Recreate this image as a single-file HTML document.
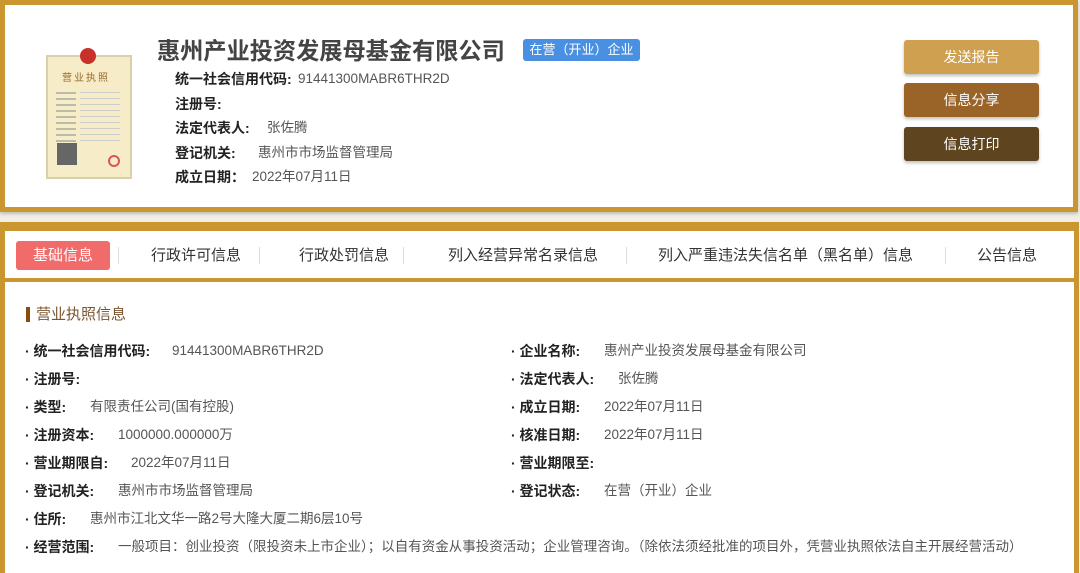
<!DOCTYPE html>
<html><head><meta charset="utf-8"><style>
*{margin:0;padding:0;box-sizing:border-box}
html{width:1080px;height:573px;overflow:hidden}
body{width:1080px;height:573px;overflow:hidden;background:#f1eee8;font-family:"Liberation Sans","Noto Sans CJK SC",sans-serif;position:relative;color:#333;line-height:20px}
.a{position:absolute;white-space:nowrap}
.card1{position:absolute;left:0;top:0;width:1078px;height:212px;border:5px solid #c9962f;background:#fff;box-shadow:0 2px 3px rgba(0,0,0,.2)}
.card2{position:absolute;left:0;top:222px;width:1079px;height:351px;border:5px solid #c9962f;border-top:9px solid #c9962f;border-bottom:0;background:#fff}
.lb{font-weight:bold;color:#222;font-size:14px}
.v{color:#555;font-size:13.5px}
.btn{position:absolute;left:904px;width:135px;height:34px;border-radius:3px;color:#fff;font-size:14px;text-align:center;line-height:34px;box-shadow:0 2px 3px rgba(0,0,0,.25)}
.tab{position:absolute;top:246px;font-size:15px;color:#333}
.sep{position:absolute;top:247px;width:1px;height:17px;background:#ddd}
.r{position:absolute;font-size:13.5px;white-space:nowrap}
.r b{color:#222;font-size:14px}
.r span{color:#555}
</style></head><body>
<div class="card1"></div>
<div class="a" style="left:46px;top:55px;width:86px;height:124px;background:#f7ecc8;border:2px solid #d9cfa8"></div>
<div class="a" style="left:80px;top:48px;width:16px;height:16px;border-radius:50%;background:#c8302a"></div>
<div class="a" style="left:62px;top:69px;font-size:10px;color:#9a6a2a;letter-spacing:2px">营业执照</div>
<div class="a" style="left:56px;top:92px;width:20px;height:50px;background:repeating-linear-gradient(#bba 0 2px,transparent 2px 6px)"></div>
<div class="a" style="left:80px;top:92px;width:40px;height:50px;background:repeating-linear-gradient(#ccc 0 1px,transparent 1px 6px)"></div>
<div class="a" style="left:57px;top:143px;width:20px;height:22px;background:#666"></div>
<div class="a" style="left:108px;top:155px;width:12px;height:12px;border-radius:50%;border:2px solid #d55"></div>

<div class="a" style="left:157px;top:36px;font-size:23.2px;line-height:30px;font-weight:bold;color:#444">惠州产业投资发展母基金有限公司</div>
<div class="a" style="left:523px;top:39px;width:117px;height:22px;background:#4a90e2;border-radius:3px;color:#fff;font-size:13px;line-height:22px;text-align:center">在营（开业）企业</div>
<div class="a lb" style="left:175px;top:69px">统一社会信用代码:</div><div class="a v" style="left:298px;top:69px">91441300MABR6THR2D</div>
<div class="a lb" style="left:175px;top:94px">注册号:</div>
<div class="a lb" style="left:175px;top:118px">法定代表人:</div><div class="a v" style="left:267px;top:118px">张佐腾</div>
<div class="a lb" style="left:175px;top:143px">登记机关:</div><div class="a v" style="left:258px;top:143px">惠州市市场监督管理局</div>
<div class="a lb" style="left:175px;top:167px">成立日期：</div><div class="a v" style="left:252px;top:167px">2022年07月11日</div>

<div class="btn" style="top:40px;background:#cfa04f">发送报告</div>
<div class="btn" style="top:83px;background:#9a6428">信息分享</div>
<div class="btn" style="top:127px;background:#5e4520">信息打印</div>

<div class="card2"></div>
<div class="a" style="left:5px;top:278px;width:1071px;height:4px;background:#c9962f"></div>
<div class="a" style="left:16px;top:241px;width:94px;height:29px;background:#f26b6b;border-radius:3px;color:#fff;font-size:15px;line-height:29px;text-align:center">基础信息</div>
<div class="sep" style="left:118px"></div>
<div class="tab" style="left:151px">行政许可信息</div>
<div class="sep" style="left:259px"></div>
<div class="tab" style="left:299px">行政处罚信息</div>
<div class="sep" style="left:403px"></div>
<div class="tab" style="left:448px">列入经营异常名录信息</div>
<div class="sep" style="left:626px"></div>
<div class="tab" style="left:658px">列入严重违法失信名单（黑名单）信息</div>
<div class="sep" style="left:945px"></div>
<div class="tab" style="left:977px">公告信息</div>

<div class="a" style="left:26px;top:307px;width:4px;height:15px;background:#8b4a10"></div>
<div class="a" style="left:36px;top:305px;font-size:15px;color:#7a5530">营业执照信息</div>

<div class="r" style="left:25px;top:341px"><b>· 统一社会信用代码:</b></div><div class="r" style="left:172px;top:341px"><span>91441300MABR6THR2D</span></div>
<div class="r" style="left:25px;top:369px"><b>· 注册号:</b></div>
<div class="r" style="left:25px;top:397px"><b>· 类型:</b></div><div class="r" style="left:90px;top:397px"><span>有限责任公司(国有控股)</span></div>
<div class="r" style="left:25px;top:425px"><b>· 注册资本:</b></div><div class="r" style="left:118px;top:425px"><span>1000000.000000万</span></div>
<div class="r" style="left:25px;top:453px"><b>· 营业期限自:</b></div><div class="r" style="left:131px;top:453px"><span>2022年07月11日</span></div>
<div class="r" style="left:25px;top:481px"><b>· 登记机关:</b></div><div class="r" style="left:118px;top:481px"><span>惠州市市场监督管理局</span></div>
<div class="r" style="left:25px;top:509px"><b>· 住所:</b></div><div class="r" style="left:90px;top:509px"><span>惠州市江北文华一路2号大隆大厦二期6层10号</span></div>
<div class="r" style="left:25px;top:537px"><b>· 经营范围:</b></div><div class="r" style="left:118px;top:537px"><span>一般项目：创业投资（限投资未上市企业）；以自有资金从事投资活动；企业管理咨询。（除依法须经批准的项目外，凭营业执照依法自主开展经营活动）</span></div>

<div class="r" style="left:511px;top:341px"><b>· 企业名称:</b></div><div class="r" style="left:604px;top:341px"><span>惠州产业投资发展母基金有限公司</span></div>
<div class="r" style="left:511px;top:369px"><b>· 法定代表人:</b></div><div class="r" style="left:618px;top:369px"><span>张佐腾</span></div>
<div class="r" style="left:511px;top:397px"><b>· 成立日期:</b></div><div class="r" style="left:604px;top:397px"><span>2022年07月11日</span></div>
<div class="r" style="left:511px;top:425px"><b>· 核准日期:</b></div><div class="r" style="left:604px;top:425px"><span>2022年07月11日</span></div>
<div class="r" style="left:511px;top:453px"><b>· 营业期限至:</b></div>
<div class="r" style="left:511px;top:481px"><b>· 登记状态:</b></div><div class="r" style="left:604px;top:481px"><span>在营（开业）企业</span></div>
</body></html>
